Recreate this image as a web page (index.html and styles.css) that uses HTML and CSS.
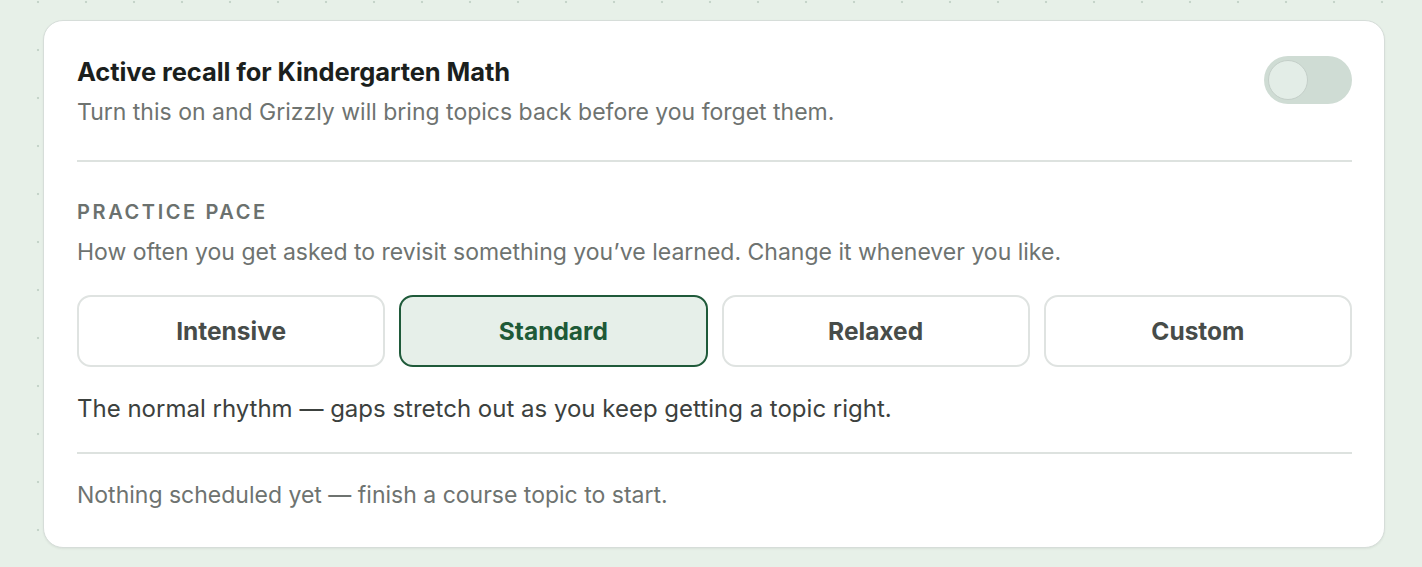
FILE: index.html
```html
<!DOCTYPE html>
<html lang="en">
<head>
<meta charset="utf-8">
<title>Active recall</title>
<link rel="stylesheet" href="styles.css">
</head>
<body>
<main class="page">
  <section class="card">
    <div class="head">
      <div class="head-text">
        <h2 class="title">Active recall for Kindergarten Math</h2>
        <p class="subtitle">Turn this on and Grizzly will bring topics back before you forget them.</p>
      </div>
      <button class="toggle" type="button" aria-label="Toggle active recall"><span class="knob"></span></button>
    </div>
    <hr class="divider divider-top">
    <div class="pace">
      <h3 class="label">Practice pace</h3>
      <p class="desc">How often you get asked to revisit something you’ve learned. Change it whenever you like.</p>
      <div class="options">
        <button class="opt" type="button">Intensive</button>
        <button class="opt opt-active" type="button">Standard</button>
        <button class="opt" type="button">Relaxed</button>
        <button class="opt" type="button">Custom</button>
      </div>
      <p class="rhythm">The normal rhythm — gaps stretch out as you keep getting a topic right.</p>
    </div>
    <hr class="divider divider-bottom">
    <p class="empty">Nothing scheduled yet — finish a course topic to start.</p>
  </section>
</main>
</body>
</html>
```
FILE: styles.css
```css
* { box-sizing: border-box; }
html, body { margin: 0; padding: 0; }
body {
  background-color: #e7f0e8;
  background-image: radial-gradient(circle, rgba(170, 190, 176, 0.55) 1px, transparent 1.6px);
  background-size: 48px 48px;
  background-position: 14px 26px;
  font-family: Inter, "Noto Sans", "Liberation Sans", sans-serif;
  height: 567px;
  overflow: hidden;
}
.page {
  padding: 20px 0 0 43px;
}
.card {
  width: 1342px;
  height: 528px;
  background: #ffffff;
  border: 1.5px solid #d6ddd9;
  border-radius: 20px;
  box-shadow: 0 1px 2px rgba(60, 80, 70, 0.08);
  padding: 35px 32px 0 33px;
}
.head {
  display: flex;
  align-items: flex-start;
  justify-content: space-between;
}
.title {
  margin: 0;
  font-size: 25.5px;
  line-height: 31px;
  font-weight: 700;
  color: #1b1f1d;
  letter-spacing: -0.1px;
}
.subtitle {
  margin: 10px 0 0;
  font-size: 23px;
  line-height: 30px;
  color: #6e7370;
}
.toggle {
  margin-top: 0;
  width: 88px;
  height: 48px;
  border-radius: 24px;
  border: 0;
  background: #cfdcd4;
  padding: 4px;
  display: flex;
  align-items: center;
  cursor: pointer;
}
.knob {
  width: 40px;
  height: 40px;
  border-radius: 50%;
  background: #e3ede7;
  border: 1.5px solid #c4cfc9;
}
.divider {
  border: 0;
  height: 2px;
  background: #dde2df;
  margin: 0;
}
.divider-top { margin-top: 33px; }
.label {
  margin: 37px 0 0;
  font-size: 20px;
  line-height: 26px;
  font-weight: 600;
  letter-spacing: 2.6px;
  text-transform: uppercase;
  color: #6b716e;
}
.desc {
  margin: 12px 0 0;
  font-size: 23px;
  line-height: 30px;
  color: #6e7370;
}
.options {
  margin-top: 28px;
  display: grid;
  grid-template-columns: repeat(4, 1fr);
  gap: 14px;
}
.opt {
  height: 72px;
  border-radius: 14px;
  border: 2px solid #dfe3e1;
  background: #ffffff;
  font-family: inherit;
  font-size: 24.5px;
  font-weight: 700;
  color: #474c49;
  cursor: pointer;
}
.opt-active {
  background: #e6efe9;
  border-color: #1f5a3a;
  color: #1e5a37;
}
.rhythm {
  margin: 26px 0 0;
  font-size: 24px;
  line-height: 32px;
  color: #3c413e;
}
.divider-bottom { margin-top: 27px; }
.empty {
  margin: 26px 0 0;
  font-size: 23px;
  line-height: 30px;
  color: #6e7370;
}
```
